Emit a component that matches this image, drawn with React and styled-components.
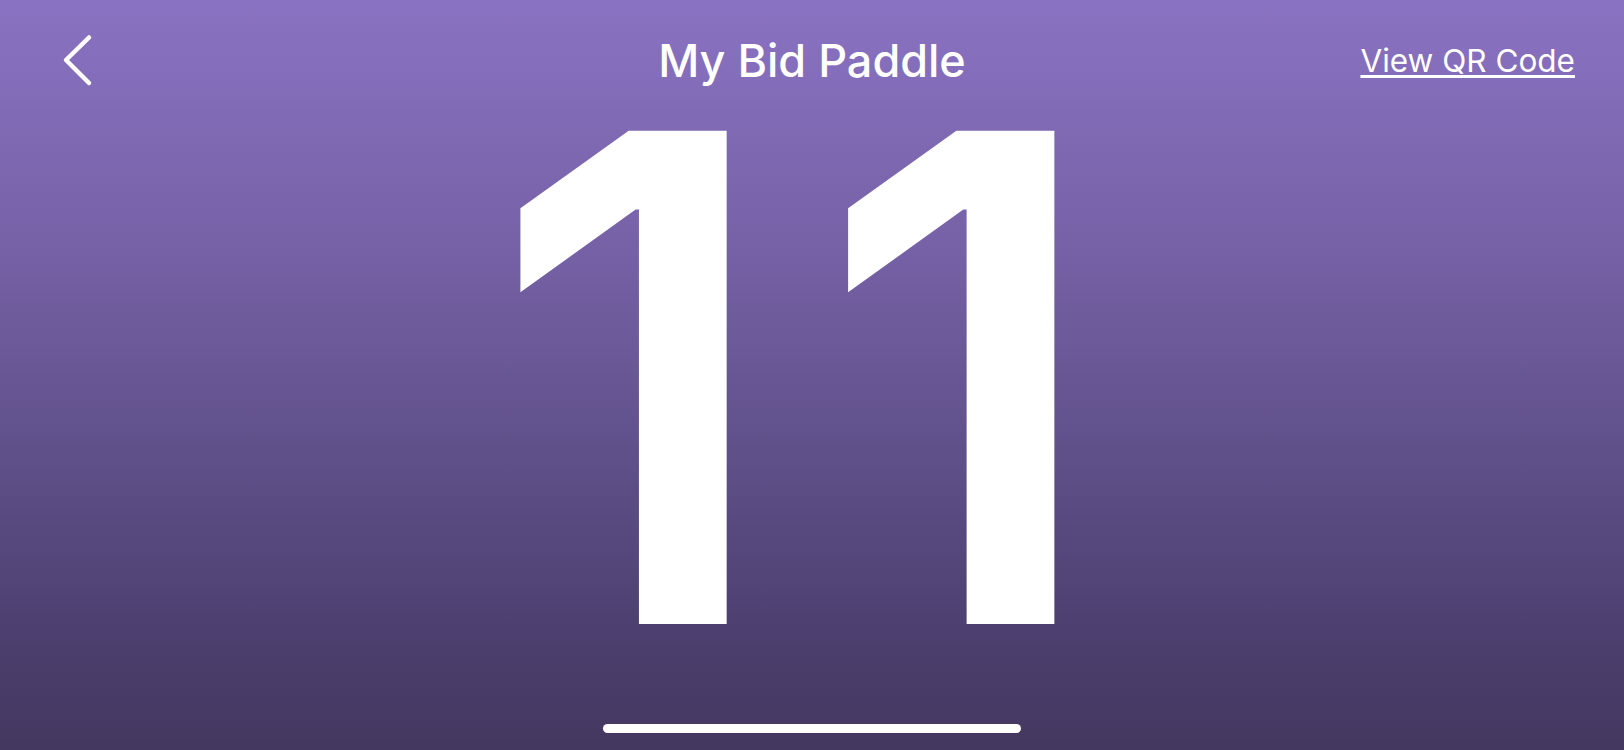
import React from 'react'
import styled, { createGlobalStyle } from 'styled-components'

const GlobalStyle = createGlobalStyle`
  html, body {
    margin: 0;
    padding: 0;
    height: 100%;
  }
  body {
    font-family: Inter, "Liberation Sans", sans-serif;
    color: white;
    overflow: hidden;
  }
  #root {
    height: 100%;
  }
`

const Screen = styled.div`
  height: 100vh;
  display: flex;
  flex-direction: column;
  overflow: hidden;
  background: linear-gradient(180deg, #8a72c2 0%, #7863a9 30%, #5e4f88 62%, #4a3d6b 88%, #44375f 100%);
`

const Header = styled.div`
  height: 124px;
  box-sizing: border-box;
  padding: 33px 49px 0 49px;
  display: grid;
  grid-template-columns: 1fr auto 1fr;
  align-items: start;
`

const BackButton = styled.button`
  justify-self: start;
  margin-left: 12px;
  padding: 0;
  border: none;
  background: none;
  width: 32px;
  height: 54px;
  cursor: pointer;
  display: flex;
`

const Title = styled.h1`
  margin: 0;
  font-size: 45px;
  line-height: 56px;
  font-weight: 500;
  letter-spacing: 0;
`

const QrLink = styled.a`
  justify-self: end;
  margin-top: 8px;
  font-size: 31.5px;
  line-height: 40px;
  font-weight: 400;
  color: white;
  text-decoration: underline;
  text-decoration-thickness: 2.5px;
  text-underline-offset: 3px;
  cursor: pointer;
`

const Paddle = styled.div`
  font-size: 678px;
  line-height: 0.75;
  font-weight: 600;
  text-align: center;
  padding-left: 10px;
  letter-spacing: 41px;
`

const Spacer = styled.div`
  flex: 1;
`

const HomeBar = styled.div`
  width: 418px;
  height: 9px;
  border-radius: 5px;
  background: white;
  align-self: center;
  margin-bottom: 17px;
`

export default function App() {
  return (
    <>
      <GlobalStyle />
      <Screen>
        <Header>
          <BackButton aria-label="Back">
            <svg width="32" height="54" viewBox="0 0 32 54" fill="none">
              <path d="M28 4.5 L5 27 L28 50" stroke="white" strokeWidth="4.5" strokeLinecap="round" strokeLinejoin="round" />
            </svg>
          </BackButton>
          <Title>My Bid Paddle</Title>
          <QrLink>View QR Code</QrLink>
        </Header>
        <Paddle>11</Paddle>
        <Spacer />
        <HomeBar />
      </Screen>
    </>
  )
}
